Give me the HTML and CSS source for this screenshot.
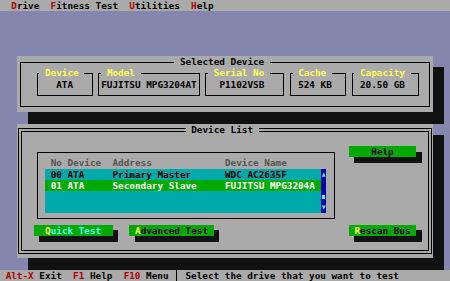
FILE: index.html
```html
<!DOCTYPE html>
<html>
<head>
<meta charset="utf-8">
<title>Drive Fitness Test</title>
<link rel="stylesheet" href="styles.css">
</head>
<body>
<div class="screen">
  <nav class="menubar">
    <span class="mi"><span class="hk">D</span>rive</span>
    <span class="mi"><span class="hk">F</span>itness Test</span>
    <span class="mi"><span class="hk">U</span>tilities</span>
    <span class="mi"><span class="hk">H</span>elp</span>
  </nav>

  <div class="shadow sh-selected"></div>
  <section class="panel selected">
    <div class="frame"></div>
    <div class="ptitle t-selected">Selected Device</div>
    <div class="field f-device"><div class="flabel">Device</div><div class="fvalue">ATA</div></div>
    <div class="field f-model"><div class="flabel">Model</div><div class="fvalue">FUJITSU MPG3204AT</div></div>
    <div class="field f-serial"><div class="flabel">Serial No</div><div class="fvalue">P1102VSB</div></div>
    <div class="field f-cache"><div class="flabel">Cache</div><div class="fvalue">524 KB</div></div>
    <div class="field f-capacity"><div class="flabel">Capacity</div><div class="fvalue">20.50 GB</div></div>
  </section>

  <div class="shadow sh-list"></div>
  <section class="panel devlist">
    <div class="frame double"></div>
    <div class="ptitle t-list">Device List</div>

    <div class="listbox">
      <div class="lhead"><span>No</span><span>Device</span><span>Address</span><span>Device Name</span></div>
      <div class="lbody">
        <div class="lrows">
          <div class="lrow"><span>00</span><span>ATA</span><span>Primary Master</span><span>WDC AC2635F</span></div>
          <div class="lrow sel"><span>01</span><span>ATA</span><span>Secondary Slave</span><span>FUJITSU MPG3204A</span></div>
          <div class="lrow"></div>
          <div class="lrow"></div>
        </div>
        <div class="scroll">
          <svg class="arrow" viewBox="0 0 5.625 11.24"><polygon points="0.9,7.8 2.8,3.4 4.7,7.8"/></svg>
          <span class="track"></span>
          <span class="track"><i class="thumb"></i></span>
          <svg class="arrow" viewBox="0 0 5.625 11.24"><polygon points="0.9,3.4 2.8,7.8 4.7,3.4"/></svg>
        </div>
      </div>
    </div>

    <div class="btn-shadow bs-help"></div>
    <div class="btn b-help">Help</div>

    <div class="btn-shadow bs-quick"></div>
    <div class="btn b-quick focus"><span class="bhk">Q</span>uick Test</div>

    <div class="btn-shadow bs-adv"></div>
    <div class="btn b-adv"><span class="bhk">A</span>dvanced Test</div>

    <div class="btn-shadow bs-rescan"></div>
    <div class="btn b-rescan"><span class="bhk">R</span>escan Bus</div>
  </section>

  <footer class="statusbar">
    <div class="keys">
      <span><span class="hk">Alt-X</span> Exit</span>
      <span><span class="hk">F1</span> Help</span>
      <span><span class="hk">F10</span> Menu</span>
    </div>
    <span class="sep"></span>
    <span class="msg">Select the drive that you want to test</span>
  </footer>
</div>
</body>
</html>
```

FILE: styles.css
```css
:root {
  --cw: 5.625px;
  --ch: 11.24px;
  --gray: #aaaaaa;
  --black: #111111;
  --yellow: #ffff55;
  --red: #b00000;
  --cyan: #00aaaa;
  --green: #00aa00;
  --blue: #0000aa;
  --lcyan: #55ffff;
}

html, body {
  margin: 0;
  padding: 0;
}

body {
  width: 450px;
  height: 281px;
  overflow: hidden;
  background: #8585ad;
  font-family: "DejaVu Sans Mono", "Liberation Mono", monospace;
  font-weight: bold;
  font-size: 9.34px;
  line-height: var(--ch);
  color: #000;
}

.screen {
  display: grid;
  grid-template-columns: repeat(80, var(--cw));
  grid-template-rows: repeat(25, var(--ch));
  width: 450px;
  height: 281px;
}

/* menu bar */
.menubar {
  grid-row: 1;
  grid-column: 1 / -1;
  background: var(--gray);
  display: flex;
  gap: calc(2 * var(--cw));
  padding-left: calc(2 * var(--cw));
}

.hk { color: var(--red); }

/* status bar */
.statusbar {
  grid-row: 25;
  grid-column: 1 / -1;
  background: var(--gray);
  display: flex;
  padding-left: var(--cw);
}

.keys {
  display: flex;
  gap: calc(2 * var(--cw));
}

.sep {
  width: var(--cw);
  margin: 0 var(--cw);
  background: linear-gradient(to right, transparent 2px, #000 2px, #000 3px, transparent 3px);
}

/* panels */
.shadow { background: var(--black); }
.sh-selected { grid-row: 7 / 12; grid-column: 6 / 80; }
.sh-list { grid-row: 13 / 25; grid-column: 6 / 80; }

.panel {
  background: var(--gray);
  display: grid;
  grid-template-columns: repeat(74, var(--cw));
}

.selected {
  grid-row: 6 / 11;
  grid-column: 4 / 78;
  grid-template-rows: repeat(5, var(--ch));
}

.devlist {
  grid-row: 12 / 24;
  grid-column: 4 / 78;
  grid-template-rows: repeat(12, var(--ch));
}

.frame {
  grid-row: 1 / -1;
  grid-column: 1 / -1;
  margin: calc(var(--ch) / 2) calc(var(--cw) / 2);
  border: 1px solid #000;
}

.frame.double {
  margin: calc(var(--ch) / 2 - 1.5px) calc(var(--cw) / 2 - 1.5px);
  border: 4px double #000;
}

.ptitle {
  grid-row: 1;
  background: var(--gray);
  padding: 0 var(--cw);
}
.t-selected { grid-column: 29 / 46; }
.t-list { grid-column: 31 / 44; }

/* info fields */
.field {
  grid-row: 2 / 5;
  margin: calc(var(--ch) / 2) calc(var(--cw) / 2);
  border: 1px solid #000;
  display: flex;
  flex-direction: column;
  align-items: flex-start;
}

.flabel {
  margin-top: calc(var(--ch) / -2 - 1px);
  margin-left: calc(var(--cw) / 2 - 1px);
  padding: 0 var(--cw);
  height: var(--ch);
  background: var(--gray);
  color: var(--yellow);
}

.fvalue {
  height: var(--ch);
  margin-left: calc((var(--off) - 0.5) * var(--cw) - 1px);
}

.f-device { grid-column: 4 / 15; --off: 4; }
.f-model { grid-column: 15 / 34; --off: 1; }
.f-serial { grid-column: 34 / 49; --off: 3; }
.f-cache { grid-column: 49 / 60; --off: 2; }
.f-capacity { grid-column: 60 / 73; --off: 2; }

/* list */
.listbox {
  grid-row: 3 / 10;
  grid-column: 4 / 58;
  margin: calc(var(--ch) / 2) calc(var(--cw) / 2);
  border: 1px solid #000;
  padding: calc(var(--ch) / 2 - 1px) calc(1.5 * var(--cw) - 1px);
  display: flex;
  flex-direction: column;
}

.lhead, .lrow {
  display: grid;
  grid-template-columns: calc(3 * var(--cw)) calc(8 * var(--cw)) calc(20 * var(--cw)) calc(17 * var(--cw));
  padding-left: var(--cw);
  height: var(--ch);
}

.lhead { color: #555555; }

.lbody { display: flex; }

.lrows {
  width: calc(49 * var(--cw));
  display: flex;
  flex-direction: column;
}

.lrow { background: var(--cyan); }
.lrow.sel { background: var(--green); color: #ffffff; }

.scroll {
  width: var(--cw);
  background: var(--blue);
  display: flex;
  flex-direction: column;
}

.arrow {
  display: block;
  width: var(--cw);
  height: var(--ch);
  fill: var(--lcyan);
}

.track {
  display: flex;
  height: var(--ch);
  align-items: center;
  justify-content: center;
}

.thumb {
  width: 3px;
  height: 4px;
  background: var(--lcyan);
}

/* buttons */
.btn {
  background: var(--green);
  text-align: center;
  color: #000;
}
.btn.focus { color: var(--lcyan); }
.bhk { color: var(--yellow); }

.btn-shadow {
  background: var(--black);
  margin: calc(var(--ch) / 2) 0;
}

.b-help { grid-row: 3; grid-column: 60 / 72; }
.bs-help { grid-row: 3 / 5; grid-column: 61 / 73; }

.b-quick { grid-row: 10; grid-column: 4 / 18; }
.bs-quick { grid-row: 10 / 12; grid-column: 5 / 19; }

.b-adv { grid-row: 10; grid-column: 21 / 36; }
.bs-adv { grid-row: 10 / 12; grid-column: 22 / 37; }

.b-rescan { grid-row: 10; grid-column: 60 / 72; }
.bs-rescan { grid-row: 10 / 12; grid-column: 61 / 73; }
```
